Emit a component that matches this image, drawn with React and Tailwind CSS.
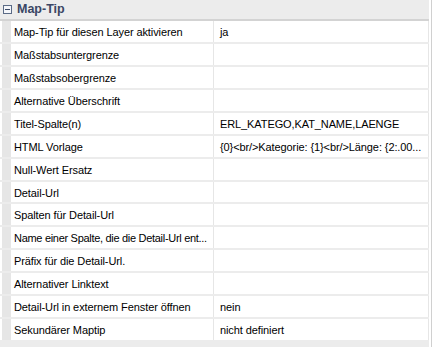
const rows = [
  ['Map-Tip für diesen Layer aktivieren', 'ja'],
  ['Maßstabsuntergrenze', ''],
  ['Maßstabsobergrenze', ''],
  ['Alternative Überschrift', ''],
  ['Titel-Spalte(n)', 'ERL_KATEGO,KAT_NAME,LAENGE'],
  ['HTML Vorlage', '{0}<br/>Kategorie: {1}<br/>Länge: {2:.00...'],
  ['Null-Wert Ersatz', ''],
  ['Detail-Url', ''],
  ['Spalten für Detail-Url', ''],
  ['Name einer Spalte, die die Detail-Url ent...', ''],
  ['Präfix für die Detail-Url.', ''],
  ['Alternativer Linktext', ''],
  ['Detail-Url in externem Fenster öffnen', 'nein'],
  ['Sekundärer Maptip', 'nicht definiert'],
]

export default function App() {
  return (
    <div
      className="w-[433px] h-[347px] bg-white flex overflow-hidden"
      style={{ fontFamily: '"Liberation Sans", Arial, sans-serif' }}
    >
      <div className="w-[429px] flex flex-col bg-[#ececec]">
        <div className="h-[21px] shrink-0 flex items-center gap-[5px] pl-[3px] pb-[1px] border-b-2 border-[#d3d3d3]">
          <span className="w-[9px] h-[9px] border border-[#5b6b86] bg-[#f4f6fa] flex items-center justify-center">
            <span className="w-[5px] h-px bg-[#3b4a66]" />
          </span>
          <span className="text-[12.5px] font-bold text-[#3a4664] leading-none">Map-Tip</span>
        </div>
        <div className="flex flex-col bg-white shrink-0">
          {rows.map(([label, value], i) => (
            <div
              key={label}
              className={
                (i === 7 ? 'h-[22px] ' : 'h-[23px] ') +
                'flex border-b-2 border-[#ececec] text-[11px] text-black'
              }
            >
              <div className="w-[2px]" />
              <div className="w-[8px] bg-[#e6e6e6]" />
              <div
                className={
                  (i === 9 ? 'tracking-[-0.3px] ' : 'tracking-[-0.1px] ') +
                  'w-[204px] border-l border-r border-[#e6e6e6] pl-[3px] pt-[2px] flex items-center whitespace-nowrap overflow-hidden'
                }
              >
                {label}
              </div>
              <div className="flex-1 pl-[6px] pt-[2px] flex items-center border-r border-[#e6e6e6] whitespace-nowrap overflow-hidden tracking-[-0.1px]">
                {value}
              </div>
            </div>
          ))}
        </div>
        <div className="flex-1 bg-[#ececec]" />
      </div>
      <div className="w-[2px]" />
      <div className="w-px bg-[#d0d0d0]" />
    </div>
  )
}
